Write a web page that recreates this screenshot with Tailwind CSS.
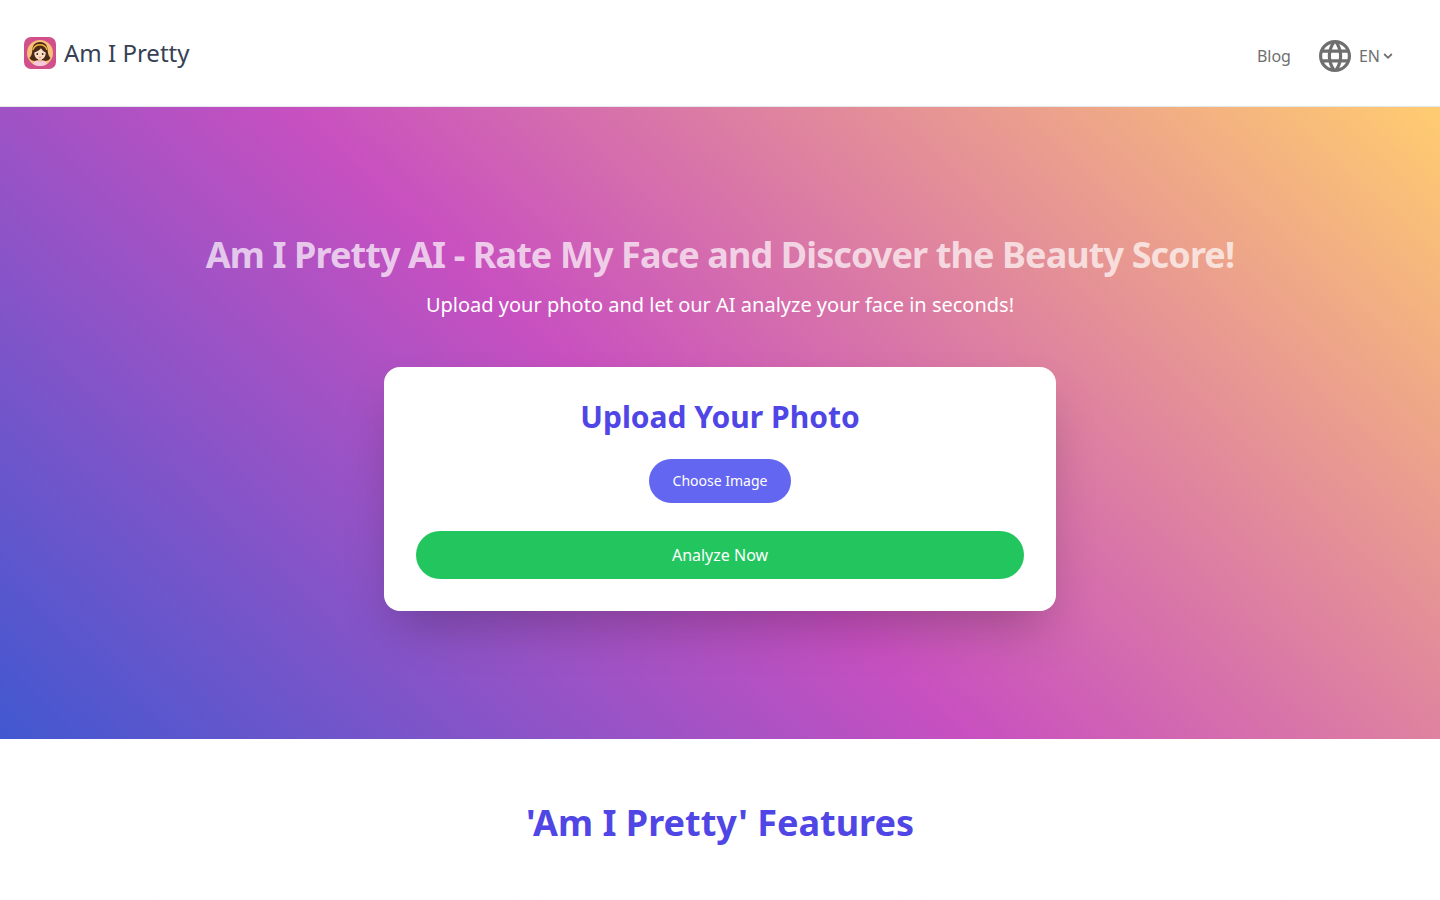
<!DOCTYPE html>
<html lang="en">
<head>
<meta charset="utf-8">
<meta name="viewport" content="width=device-width, initial-scale=1">
<title>Am I Pretty</title>
<script src="https://cdn.jsdelivr.net/npm/@tailwindcss/browser@4"></script>
</head>
<body class="overflow-x-hidden bg-white font-['Noto_Sans',sans-serif] text-gray-700">
<header class="flex h-[107px] items-center justify-between border-b border-gray-200 px-6">
  <a href="#" class="flex items-center gap-2">
    <svg class="size-8" viewBox="0 0 32 32" aria-hidden="true">
      <rect width="32" height="32" rx="7" fill="#d14f8b"/>
      <circle cx="16" cy="16" r="13" fill="#f6c07a"/>
      <path d="M16 5c-4.500 0-7.300 2.900-7.600 7.500-.3 4.200-.8 6-2.900 8.500 1.500 2.700 4.800 3.600 7 2.500h7c2.200 1.100 5.500.2 7-2.500-2.100-2.500-2.600-4.300-2.900-8.500C23.300 7.900 20.500 5 16 5z" fill="#4a2a16"/>
      <path d="M8.800 26.800c1-2.200 3.200-3 5.200-3.300h4c2 .3 4.200 1.100 5.200 3.300C21.300 28.300 19 29 16 29s-5.300-.7-7.200-2.200z" fill="#f6c9de"/>
      <path d="M14.200 21h3.600v3c-.7 1.300-2.900 1.300-3.600 0z" fill="#efb896"/>
      <path d="M10.300 15.500c2.800-.7 5-2.200 6.700-4.200 1 1.900 2.600 3.400 4.700 4.200.2 4.200-2.200 7-5.700 7s-5.900-2.800-5.700-7z" fill="#fce0c6"/>
      <path d="M9 12.800C10 9.300 12.500 7.700 16 7.700s6 1.600 7 5.100" fill="none" stroke="#f3b640" stroke-width="1.500"/>
      <circle cx="13.300" cy="17" r=".9" fill="#3b2018"/><circle cx="18.700" cy="17" r=".9" fill="#3b2018"/>
      <path d="M14.700 20q1.300 1 2.600 0" fill="none" stroke="#d45a5a" stroke-width=".7"/>
    </svg>
    <span class="text-2xl">Am I Pretty</span>
  </a>
  <nav class="mt-1.5 mr-5 flex items-center gap-7 text-[#6f6f6f]">
    <a href="#">Blog</a>
    <button type="button" class="flex items-center" aria-label="Language: EN">
      <svg class="mr-2 size-8" viewBox="2 2 20 20" fill="currentColor" aria-hidden="true"><path d="M11.990 2C6.470 2 2 6.480 2 12s4.470 10 9.990 10C17.520 22 22 17.520 22 12S17.520 2 11.990 2zm6.930 6h-2.950c-.32-1.250-.78-2.450-1.380-3.560 1.840.63 3.370 1.910 4.330 3.560zM12 4.040c.83 1.200 1.480 2.530 1.910 3.960h-3.820c.43-1.430 1.080-2.760 1.910-3.960zM4.260 14C4.100 13.360 4 12.690 4 12s.1-1.360.26-2h3.380c-.08.66-.14 1.320-.14 2s.06 1.340.14 2H4.260zm.82 2h2.950c.32 1.250.78 2.450 1.380 3.560-1.840-.63-3.370-1.900-4.330-3.560zm2.950-8H5.080c.96-1.660 2.490-2.930 4.330-3.560C8.810 5.550 8.350 6.750 8.030 8zM12 19.960c-.83-1.200-1.480-2.530-1.910-3.960h3.820c-.43 1.430-1.080 2.760-1.910 3.960zM14.340 14H9.660c-.09-.66-.16-1.320-.16-2s.07-1.350.16-2h4.680c.09.65.16 1.320.16 2s-.07 1.340-.16 2zm.25 5.560c.6-1.110 1.060-2.310 1.380-3.560h2.950c-.96 1.650-2.490 2.930-4.330 3.560zM16.360 14c.08-.66.14-1.320.14-2s-.06-1.340-.14-2h3.380c.16.640.26 1.310.26 2s-.1 1.360-.26 2h-3.380z"/></svg>
      <span>EN</span>
      <svg class="size-4" viewBox="0 0 16 16" fill="none" stroke="currentColor" stroke-width="1.800" aria-hidden="true"><path d="M4.200 6l3.800 3.800L11.800 6"/></svg>
    </button>
  </nav>
</header>
<main>
  <section class="bg-[linear-gradient(43deg,#4158d0_0%,#c850c0_46%,#ffcc70_100%)] px-4 py-32 text-center">
    <h1 class="mb-4 text-4xl font-bold tracking-tight text-white/70">Am I Pretty AI - Rate My Face and Discover the Beauty Score!</h1>
    <p class="mb-12 text-xl text-white">Upload your photo and let our AI analyze your face in seconds!</p>
    <div class="mx-auto flex max-w-2xl flex-col items-center rounded-2xl bg-white p-8 shadow-2xl">
      <h2 class="mb-6 text-3xl font-bold text-[#4f46e5]">Upload Your Photo</h2>
      <button type="button" class="mb-7 rounded-full bg-[#6366f1] px-6 py-3 text-sm text-white">Choose Image</button>
      <button type="button" class="w-full rounded-full bg-[#22c55e] px-6 py-3 text-white">Analyze Now</button>
    </div>
  </section>
  <section class="h-[161px] overflow-hidden px-4 pt-16">
    <h2 class="mb-12 text-center text-4xl font-bold text-[#4f46e5]">'Am I Pretty' Features</h2>
    <div class="mx-auto grid max-w-[1120px] grid-cols-3 gap-8">
      <div class="h-60 rounded-lg bg-white shadow-lg"></div>
      <div class="h-60 rounded-lg bg-white shadow-lg"></div>
      <div class="h-60 rounded-lg bg-white shadow-lg"></div>
    </div>
  </section>
</main>
</body>
</html>
